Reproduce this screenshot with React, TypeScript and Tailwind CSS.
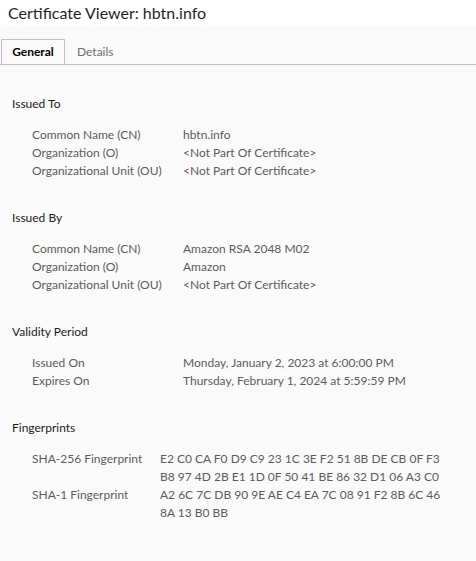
import React from 'react';

type Row = { label: string; value: string[] };
type Section = { title: string; valueCol: string; rows: Row[] };

const sections: Section[] = [
    {
        title: 'Issued To',
        valueCol: 'grid-cols-[151px_1fr]',
        rows: [
            { label: 'Common Name (CN)', value: ['hbtn.info'] },
            { label: 'Organization (O)', value: ['<Not Part Of Certificate>'] },
            { label: 'Organizational Unit (OU)', value: ['<Not Part Of Certificate>'] },
        ],
    },
    {
        title: 'Issued By',
        valueCol: 'grid-cols-[151px_1fr]',
        rows: [
            { label: 'Common Name (CN)', value: ['Amazon RSA 2048 M02'] },
            { label: 'Organization (O)', value: ['Amazon'] },
            { label: 'Organizational Unit (OU)', value: ['<Not Part Of Certificate>'] },
        ],
    },
    {
        title: 'Validity Period',
        valueCol: 'grid-cols-[151px_1fr]',
        rows: [
            { label: 'Issued On', value: ['Monday, January 2, 2023 at 6:00:00 PM'] },
            { label: 'Expires On', value: ['Thursday, February 1, 2024 at 5:59:59 PM'] },
        ],
    },
    {
        title: 'Fingerprints',
        valueCol: 'grid-cols-[128px_1fr]',
        rows: [
            {
                label: 'SHA-256 Fingerprint',
                value: ['E2 C0 CA F0 D9 C9 23 1C 3E F2 51 8B DE CB 0F F3', 'B8 97 4D 2B E1 1D 0F 50 41 BE 86 32 D1 06 A3 C0'],
            },
            {
                label: 'SHA-1 Fingerprint',
                value: ['A2 6C 7C DB 90 9E AE C4 EA 7C 08 91 F2 8B 6C 46', '8A 13 B0 BB'],
            },
        ],
    },
];

export default function App() {
    return (
        <div className="w-[476px] h-[561px] flex flex-col bg-[#fafafa] font-['Lato',sans-serif] overflow-hidden">
            {/* window title */}
            <div className="h-[25px] bg-white flex items-center pl-2 text-[16px] text-[#1f1f1f]">
                Certificate Viewer: hbtn.info
            </div>

            {/* tabs */}
            <div className="pt-[14px] border-b border-[#c2c2c2] flex pl-px text-[12px]">
                <div className="h-[25px] w-[64px] -mb-px border border-b-0 border-[#c2c2c2] bg-[#fafafa] flex items-center justify-center font-bold text-black">
                    General
                </div>
                <div className="h-[25px] px-3 flex items-center text-[#6e6e6e]">Details</div>
            </div>

            {/* body */}
            <div className="mt-px flex flex-col text-[12px] leading-[18px]">
                {sections.map((s) => (
                    <div key={s.title} className="pt-[29px] pl-3">
                        <div className="text-[#1a1a1a]">{s.title}</div>
                        <div className={`mt-[13px] pl-5 grid ${s.valueCol} text-[#5c5c5c]`}>
                            {s.rows.map((r) => (
                                <React.Fragment key={r.label}>
                                    <div>{r.label}</div>
                                    <div>
                                        {r.value.map((v) => (
                                            <div key={v}>{v}</div>
                                        ))}
                                    </div>
                                </React.Fragment>
                            ))}
                        </div>
                    </div>
                ))}
            </div>
        </div>
    );
}
